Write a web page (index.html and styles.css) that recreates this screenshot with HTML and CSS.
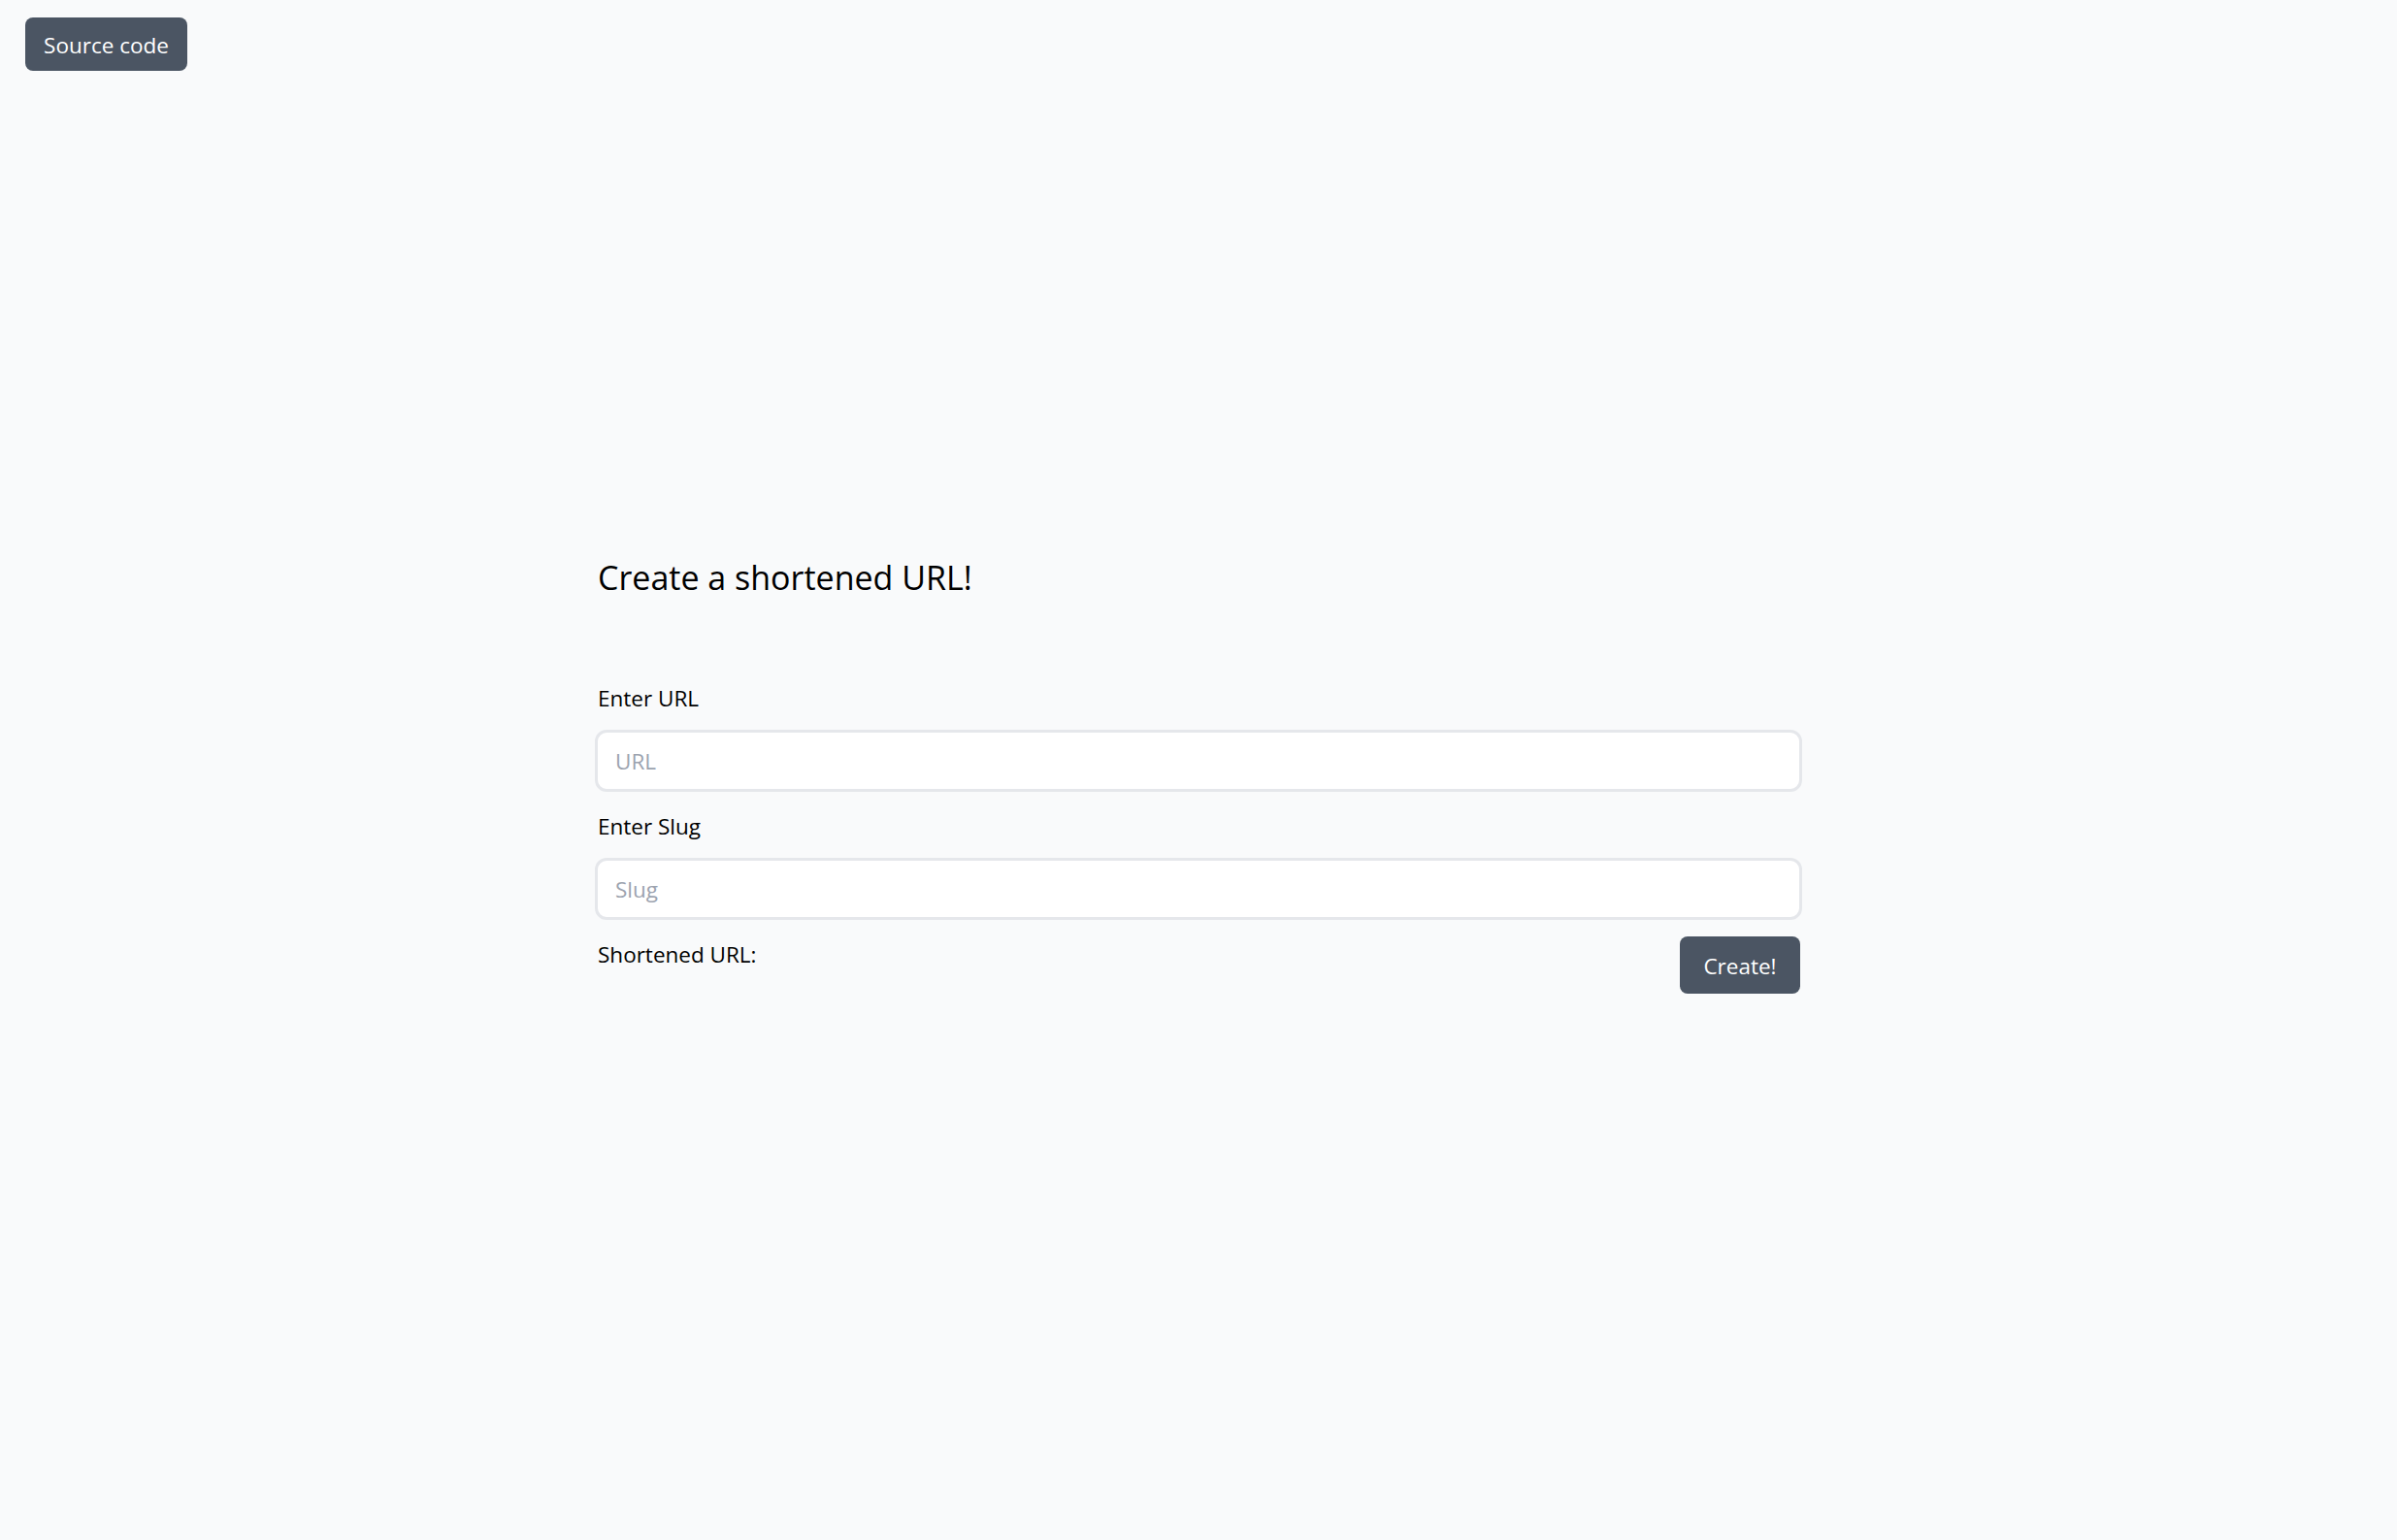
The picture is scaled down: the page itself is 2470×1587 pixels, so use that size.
FILE: index.html
```html
<!DOCTYPE html>
<html lang="en">
<head>
<meta charset="utf-8">
<title>URL Shortener</title>
<link rel="stylesheet" href="styles.css">
</head>
<body>
<header class="topbar">
  <a class="btn source-btn" href="#">Source code</a>
</header>
<main class="wrap">
  <h1 class="title">Create a shortened URL!</h1>
  <form class="form">
    <div class="field">
      <label class="label" for="url">Enter URL</label>
      <input class="input" id="url" type="text" placeholder="URL">
    </div>
    <div class="field">
      <label class="label" for="slug">Enter Slug</label>
      <input class="input" id="slug" type="text" placeholder="Slug">
    </div>
    <div class="result-row">
      <span class="result">Shortened URL:</span>
      <button class="btn create-btn" type="button">Create!</button>
    </div>
  </form>
</main>
</body>
</html>
```
FILE: styles.css
```css
html, body {
  margin: 0;
  padding: 0;
}
body {
  background: #f9fafb;
  color: #000;
  font-family: "Open Sans", "Noto Sans", sans-serif;
  min-height: 100vh;
}
.topbar {
  padding: 18px 0 0 26px;
  height: 55px;
}
.btn {
  display: inline-flex;
  align-items: center;
  justify-content: center;
  box-sizing: border-box;
  background: #4b5563;
  color: #fff;
  text-decoration: none;
  border: none;
  border-radius: 8px;
  font-family: "Open Sans", "Noto Sans", sans-serif;
  font-size: 22.5px;
  cursor: pointer;
}
.source-btn {
  width: 167px;
  height: 55px;
  padding-top: 2px;
}
.wrap {
  width: 1244px;
  margin: 0 auto;
  padding-top: 495px;
}
.title {
  margin: 0;
  font-size: 34px;
  font-weight: 400;
  line-height: 54px;
  padding-left: 3px;
}
.form {
  margin-top: 80px;
  display: flex;
  flex-direction: column;
  gap: 18px;
}
.field {
  display: flex;
  flex-direction: column;
}
.label {
  font-size: 22.5px;
  line-height: 36px;
  margin-bottom: 14px;
  padding-left: 3px;
}
.input {
  box-sizing: border-box;
  width: 100%;
  height: 64px;
  border: 3px solid #e5e7eb;
  border-radius: 12px;
  background: #fff;
  padding: 0 18px;
  font-family: "Open Sans", "Noto Sans", sans-serif;
  font-size: 22.5px;
  outline: none;
}
.input::placeholder {
  color: #9ca3af;
}
.result-row {
  display: flex;
  justify-content: space-between;
  align-items: flex-start;
}
.result {
  font-size: 22.5px;
  line-height: 36px;
  padding-left: 3px;
}
.create-btn {
  width: 124px;
  height: 59px;
  margin-right: 2px;
  margin-top: -1px;
  padding-top: 2px;
}
```
